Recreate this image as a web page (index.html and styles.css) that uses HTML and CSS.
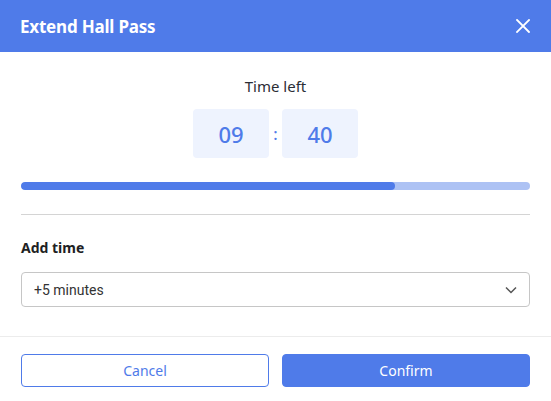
FILE: index.html
```html
<!DOCTYPE html>
<html lang="en">
    <head>
        <meta charset="UTF-8" />
        <meta name="viewport" content="width=device-width, initial-scale=1.0" />
        <title>Extend Hall Pass</title>
        <link rel="stylesheet" href="styles.css">
    </head>
    <body>
        <div class="modal">
            <div class="modal-header">
                <h1>Extend Hall Pass</h1>
                <button class="close-btn" aria-label="Close">
                    <svg width="14" height="14" viewBox="0 0 14 14">
                        <path d="M1 1 L13 13 M13 1 L1 13" stroke="#fff" stroke-width="1.8" stroke-linecap="square" fill="none" />
                    </svg>
                </button>
            </div>

            <div class="modal-body">
                <div class="timer">
                    <div class="timer-label">Time left</div>
                    <div class="timer-digits">
                        <div class="digit-box">09</div>
                        <span class="colon">:</span>
                        <div class="digit-box">40</div>
                    </div>
                </div>

                <div class="progress">
                    <div class="progress-fill" style="width: 73.5%"></div>
                </div>

                <hr class="divider" />

                <label class="field-label" for="addTime">Add time</label>
                <div class="select-wrap">
                    <select id="addTime" class="select">
                        <option>+5 minutes</option>
                        <option>+10 minutes</option>
                        <option>+15 minutes</option>
                    </select>
                    <svg class="chevron" width="12" height="8" viewBox="0 0 12 8">
                        <path d="M1 1.5 L6 6.5 L11 1.5" stroke="#555" stroke-width="1.5" fill="none" />
                    </svg>
                </div>
            </div>

            <div class="modal-footer">
                <button class="btn btn-outline">Cancel</button>
                <button class="btn btn-primary">Confirm</button>
            </div>
        </div>
    </body>
</html>
```

FILE: styles.css
```css
:root {
    --primary: #4f7be9;
    --primary-light: #adc2f4;
    --box: #eef3fe;
    --text: #2b2d35;
    --border: #c6c6c6;
    --divider: #d4d4d4;
}

* {
    margin: 0;
    padding: 0;
    box-sizing: border-box;
}

body {
    font-family: "Noto Sans", "Open Sans", sans-serif;
    background-color: #fff;
    color: var(--text);
    -webkit-font-smoothing: antialiased;
}

.modal {
    width: 551px;
    height: 401px;
    display: flex;
    flex-direction: column;
}

.modal-header {
    height: 52px;
    background-color: var(--primary);
    display: flex;
    align-items: center;
    justify-content: space-between;
    padding: 0 21px 0 20px;
}

.modal-header h1 {
    color: #fff;
    font-size: 17px;
    font-weight: 700;
    letter-spacing: -0.2px;
}

.close-btn {
    background: none;
    border: none;
    width: 20px;
    height: 20px;
    display: flex;
    align-items: center;
    justify-content: center;
    margin-right: -3px;
}

.modal-body {
    padding: 22px 21px 0;
    flex: 1;
}

.timer {
    display: flex;
    flex-direction: column;
    align-items: center;
}

.timer-label {
    font-size: 15px;
    line-height: 24px;
    color: var(--text);
}

.timer-digits {
    display: flex;
    align-items: center;
    margin-top: 11px;
}

.digit-box {
    width: 76px;
    height: 49px;
    border-radius: 4px;
    background-color: var(--box);
    color: var(--primary);
    font-size: 22px;
    font-weight: 500;
    display: flex;
    align-items: center;
    justify-content: center;
}

.colon {
    width: 13px;
    text-align: center;
    color: var(--primary);
    font-size: 16px;
    font-weight: 500;
}

.progress {
    margin-top: 24px;
    height: 8px;
    border-radius: 4px;
    background-color: var(--primary-light);
    overflow: hidden;
}

.progress-fill {
    height: 100%;
    border-radius: 4px;
    background-color: var(--primary);
}

.divider {
    border: none;
    border-top: 1px solid var(--divider);
    margin-top: 24px;
}

.field-label {
    display: block;
    margin-top: 23px;
    font-size: 14px;
    font-weight: 700;
    line-height: 20px;
    color: #1e1f24;
}

.select-wrap {
    position: relative;
    margin-top: 14px;
}

.select {
    width: 100%;
    height: 35px;
    appearance: none;
    border: 1px solid var(--border);
    border-radius: 4px;
    background: #fff;
    padding: 0 12px;
    font-family: Roboto, "Liberation Sans", sans-serif;
    font-size: 14px;
    color: #333;
}

.chevron {
    position: absolute;
    right: 13px;
    top: 14px;
    pointer-events: none;
}

.modal-footer {
    border-top: 1px solid #ececec;
    display: flex;
    gap: 13px;
    padding: 17px 21px 14px;
}

.btn {
    flex: 1;
    height: 33px;
    border-radius: 4px;
    font-family: "Noto Sans", "Open Sans", sans-serif;
    font-size: 14px;
}

.btn-outline {
    background: #fff;
    border: 1px solid var(--primary);
    color: var(--primary);
}

.btn-primary {
    background: var(--primary);
    border: 1px solid var(--primary);
    color: #fff;
}
```
